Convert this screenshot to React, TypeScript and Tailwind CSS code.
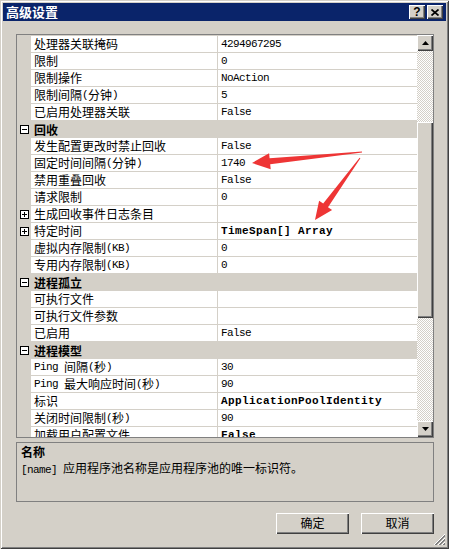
import React from "react";

type Row =
  | { kind: "cat"; name: string }
  | { kind: "prop"; name: string; value?: string; bold?: boolean; expand?: boolean };

const rows: Row[] = [
  { kind: "prop", name: "处理器关联掩码", value: "4294967295" },
  { kind: "prop", name: "限制", value: "0" },
  { kind: "prop", name: "限制操作", value: "NoAction" },
  { kind: "prop", name: "限制间隔(分钟)", value: "5" },
  { kind: "prop", name: "已启用处理器关联", value: "False" },
  { kind: "cat", name: "回收" },
  { kind: "prop", name: "发生配置更改时禁止回收", value: "False" },
  { kind: "prop", name: "固定时间间隔(分钟)", value: "1740" },
  { kind: "prop", name: "禁用重叠回收", value: "False" },
  { kind: "prop", name: "请求限制", value: "0" },
  { kind: "prop", name: "生成回收事件日志条目", value: "", expand: true },
  { kind: "prop", name: "特定时间", value: "TimeSpan[] Array", bold: true, expand: true },
  { kind: "prop", name: "虚拟内存限制(KB)", value: "0" },
  { kind: "prop", name: "专用内存限制(KB)", value: "0" },
  { kind: "cat", name: "进程孤立" },
  { kind: "prop", name: "可执行文件", value: "" },
  { kind: "prop", name: "可执行文件参数", value: "" },
  { kind: "prop", name: "已启用", value: "False" },
  { kind: "cat", name: "进程模型" },
  { kind: "prop", name: "Ping 间隔(秒)", value: "30" },
  { kind: "prop", name: "Ping 最大响应时间(秒)", value: "90" },
  { kind: "prop", name: "标识", value: "ApplicationPoolIdentity", bold: true },
  { kind: "prop", name: "关闭时间限制(秒)", value: "90" },
  { kind: "prop", name: "加载用户配置文件", value: "False", bold: true },
];

const raised =
  "shadow-[inset_1px_1px_#ffffff,inset_-1px_-1px_#404040,inset_-2px_-2px_#808080]";

// Mixed CJK / half-width text: ASCII runs use a narrow mono face.
function Txt({ s, bold }: { s: string; bold?: boolean }) {
  const parts = s.split(/([\x20-\x7e]+)/).filter((p) => p.length > 0);
  return (
    <>
      {parts.map((p, i) =>
        /^[\x20-\x7e]+$/.test(p) ? (
          <span
            key={i}
            className={
              bold
                ? "font-['Liberation_Mono'] text-[11px] font-bold tracking-[0.4px]"
                : "font-['Liberation_Mono'] text-[11px] tracking-[-0.6px]"
            }
          >
            {p}
          </span>
        ) : (
          <span key={i} className={bold ? "font-bold" : ""}>
            {p}
          </span>
        )
      )}
    </>
  );
}

function Glyph({ open }: { open: boolean }) {
  return (
    <div className="relative h-[9px] w-[9px] border border-black bg-white">
      <div className="absolute left-[1px] top-[3px] h-[1px] w-[5px] bg-black" />
      {!open && <div className="absolute left-[3px] top-[1px] h-[5px] w-[1px] bg-black" />}
    </div>
  );
}

function GridRow({ row }: { row: Row }) {
  if (row.kind === "cat") {
    return (
      <div className="flex h-[17px] shrink-0 items-center bg-[#d4d0c8]">
        <div className="flex w-[14px] justify-center pl-[1px]">
          <Glyph open />
        </div>
        <div className="pl-[3px] font-bold leading-[16px]">
          <Txt s={row.name} bold />
        </div>
      </div>
    );
  }
  return (
    <div className="flex h-[17px] shrink-0">
      <div className="flex w-[14px] items-center justify-center bg-[#d4d0c8] pl-[1px]">
        {row.expand && <Glyph open={false} />}
      </div>
      <div className="flex w-[187px] items-center whitespace-pre border-b border-r border-[#d4d0c8] bg-white pl-[3px] leading-[16px]">
        <Txt s={row.name} />
      </div>
      <div className="flex w-[199px] items-center whitespace-pre border-b border-[#d4d0c8] bg-white pl-[3px] leading-[16px]">
        <Txt s={row.value ?? ""} bold={row.bold} />
      </div>
    </div>
  );
}

function ScrollButton({ up }: { up: boolean }) {
  return (
    <div className={`flex h-[16px] w-[16px] shrink-0 items-center justify-center bg-[#d4d0c8] ${raised}`}>
      <svg width="7" height="4" viewBox="0 0 7 4">
        {up ? <path d="M3.5 0 L7 4 L0 4 Z" fill="#000" /> : <path d="M0 0 L7 0 L3.5 4 Z" fill="#000" />}
      </svg>
    </div>
  );
}

function Scrollbar() {
  return (
    <div className="flex w-[16px] flex-col">
      <ScrollButton up />
      <div className="flex flex-1 flex-col bg-[repeating-conic-gradient(#ffffff_0_25%,#d4d0c8_0_50%)] bg-[length:2px_2px]">
        <div className="h-[71px]" />
        <div className={`h-[196px] bg-[#d4d0c8] ${raised}`} />
      </div>
      <ScrollButton up={false} />
    </div>
  );
}

function TitleButton({ children }: { children: React.ReactNode }) {
  return (
    <div className={`flex h-[14px] w-[16px] items-center justify-center bg-[#d4d0c8] ${raised}`}>
      {children}
    </div>
  );
}

function PushButton({ label }: { label: string }) {
  return (
    <div className={`flex h-[21px] w-[73px] items-center justify-center bg-[#d4d0c8] pb-[1px] ${raised}`}>
      {label}
    </div>
  );
}

export default function App() {
  return (
    <div className="relative h-[551px] w-[451px] overflow-hidden bg-white font-['Noto_Sans_CJK_SC',sans-serif] text-[12px] text-black">
      <div className="relative flex h-[549px] w-[449px] flex-col bg-[#d4d0c8] p-[3px] shadow-[inset_1px_1px_#d4d0c8,inset_-1px_-1px_#404040,inset_2px_2px_#ffffff,inset_-2px_-2px_#808080]">
        {/* caption */}
        <div className="flex h-[18px] shrink-0 items-center justify-between bg-[#0a246a] pl-[3px] pr-[3px]">
          <span className="text-[13px] font-bold leading-[18px] text-white">高级设置</span>
          <div className="flex gap-[2px]">
            <TitleButton>
              <span className="font-['Liberation_Sans'] text-[12px] font-bold leading-none">?</span>
            </TitleButton>
            <TitleButton>
              <svg width="8" height="7" viewBox="0 0 8 7">
                <path d="M0.5 0.5 L7.5 6.5 M7.5 0.5 L0.5 6.5" stroke="#000" strokeWidth="1.7" />
              </svg>
            </TitleButton>
          </div>
        </div>

        <div className="flex flex-1 flex-col pl-[13px] pt-[13px]">
          {/* property grid */}
          <div className="flex h-[404px] w-[418px] border border-[#808080] bg-white">
            <div className="flex w-[400px] flex-col overflow-hidden bg-[#d4d0c8] pt-[1px]">
              {rows.map((r, i) => (
                <GridRow key={i} row={r} />
              ))}
            </div>
            <Scrollbar />
          </div>

          {/* description pane */}
          <div className="mt-[4px] h-[60px] w-[418px] border border-[#808080] pl-[4px] pt-[1px] leading-[16px]">
            <div className="font-bold">名称</div>
            <div className="whitespace-pre">
              <Txt s="[name] 应用程序池名称是应用程序池的唯一标识符。" />
            </div>
          </div>

          {/* dialog buttons */}
          <div className="mt-[11px] flex w-[418px] justify-end gap-[12px]">
            <PushButton label="确定" />
            <PushButton label="取消" />
          </div>
        </div>

        {/* size grip */}
        <svg className="absolute bottom-[3px] right-[3px]" width="12" height="12" viewBox="0 0 12 12">
          <path d="M11 1 L1 11 M11 5 L5 11 M11 9 L9 11" stroke="#808080" strokeWidth="1" />
          <path d="M11 2 L2 11 M11 6 L6 11 M11 10 L10 11" stroke="#808080" strokeWidth="1" />
          <path d="M11 0 L0 11 M11 4 L4 11 M11 8 L8 11" stroke="#ffffff" strokeWidth="1" />
        </svg>
      </div>

      {/* red annotation arrows */}
      <svg className="pointer-events-none absolute left-0 top-0" width="451" height="551" viewBox="0 0 451 551">
        <polygon
          points="361.95,151.5 269.6,158.2 269.1,153.2 252,163 270.7,169.2 270.2,164.2 362.05,152.5"
          fill="#ee3535"
        />
        <polygon
          points="359.6,157.7 323.2,203.6 319.1,200.7 315,220 332.1,210.1 328,207.2 360.4,158.3"
          fill="#ee3535"
        />
      </svg>
    </div>
  );
}
